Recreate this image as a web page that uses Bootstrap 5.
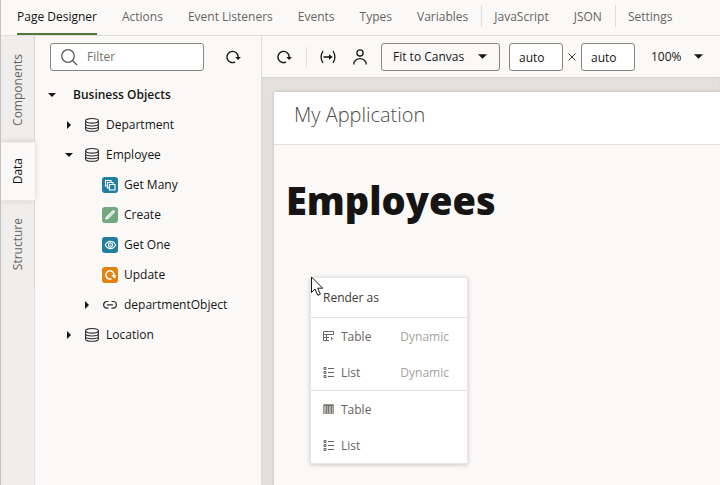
<!DOCTYPE html>
<html lang="en">
<head>
<meta charset="utf-8">
<meta name="viewport" content="width=device-width, initial-scale=1">
<title>Page Designer</title>
<link href="https://cdn.jsdelivr.net/npm/bootstrap@5.3.0/dist/css/bootstrap.min.css" rel="stylesheet">
<style>
body { font-family: "Open Sans", "Noto Sans", sans-serif; font-size: 12px; line-height: 18px; color: #161513; background: #fbf9f8; }
button { font-size: 12px; line-height: 18px; color: inherit; }
svg { display: block; flex: none; }
.shell { border-left: 1px solid #c4c2c0; }
.top-tabs { height: 36px; border-bottom: 1px solid #dfdddb; padding-left: 4px; }
.top-tabs .nav-link { color: #68645f; padding: 8px 0 7px; margin: 0 13px 0 12px; border-bottom: 2px solid transparent; white-space: nowrap; height: 35px; }
.top-tabs .nav-link.active { color: #161513; border-bottom-color: #55753f; }
.tab-rule { width: 1px; height: 22px; background: #dfdddb; margin-top: 5px; }
.rail { width: 34px; background: #f0eeec; }
.rail button { writing-mode: vertical-rl; transform: rotate(180deg); width: 34px; border: 0; border-left: 1px solid #d9d7d5; background: #f0eeec; color: #68645f; padding: 16px 8px 18px 7px; }
.rail button.active { background: #fbf9f8; color: #161513; border-left-color: #fbf9f8; box-shadow: 0 0 6px rgba(0,0,0,.16); padding-top: 16px; padding-bottom: 16px; z-index: 1; }
.tree-pane { width: 227px; border-right: 1px solid #dfdddb; }
.filter-bar { padding: 7px 20px 9px 15px; }
.filter-box { width: 154px; height: 28px; border: 1px solid #8b8580; border-radius: 3px; background: #fff; padding: 0 9px; gap: 9px; }
.filter-box input { font-size: 12px; color: #161513; background: transparent; }
.filter-box input::placeholder { color: #75716c; opacity: 1; }
.tree-row { height: 30px; }
.tree-row .twist { width: 12px; margin-right: 8px; display: flex; justify-content: center; }
.lvl0 { padding-left: 11px; font-weight: 600; }
.lvl0 .twist { margin-right: 15px; }
.lvl1 { padding-left: 28px; }
.lvl2 { padding-left: 46px; }
.tree-row .glyph { width: 18px; margin-right: 5px; display: flex; justify-content: center; }
.tool-bar { height: 41px; padding-left: 14px; }
.tool-rule { width: 1px; height: 20px; background: #dfdddb; margin: 0 12px 0 14px; }
.fit-btn { width: 119px; height: 28px; border: 1px solid #8b8580; border-radius: 3px; background: #fbf9f8; padding: 0 12px 0 11px; margin: 0 9px 0 14px; }
.size-box { width: 54px; height: 28px; border: 1px solid #8b8580; border-radius: 3px; background: #fff; padding: 2px 9px 0; font-size: 12px; color: #161513; }
.stage { background: #e4e1dc; padding: 15px 0 0 12px; box-shadow: inset 0 1px 2px rgba(0,0,0,.06); }
.sheet { background: #fbf9f8; box-shadow: 0 0 3px rgba(0,0,0,.2); }
.app-head { height: 53px; background: #fff; border-bottom: 1px solid #e4e2e0; padding: 9px 20px; font-weight: 300; font-size: 20px; line-height: 27px; color: #504c48; }
.page-title { font-weight: 800; font-size: 38px; line-height: 54px; margin: 0; padding: 28px 12px 0; color: #161513; }
.render-menu { position: absolute; left: 36px; top: 185px; width: 158px; background: #fff; border: 1px solid #e9e7e5; border-radius: 2px; box-shadow: 0 1px 4px rgba(0,0,0,.2); }
.render-head { height: 40px; padding: 11px 12px; border-bottom: 1px solid #e4e2e0; color: #3c3936; }
.render-menu button { height: 36px; padding: 2px 18px 0 12px; gap: 6px; border: 0; background: none; color: #68645f; }
.render-menu .kind { color: #a5a29f; }
.second { border-top: 1px solid #e4e2e0; }
.pointer { position: absolute; left: 0; top: -2px; }
</style>
<script src="https://cdn.jsdelivr.net/npm/bootstrap@5.3.0/dist/js/bootstrap.bundle.min.js"></script>
</head>
<body>
<svg width="0" height="0" class="position-absolute" aria-hidden="true">
  <defs>
    <symbol id="right" viewBox="0 0 8 8"><path d="M2 0L6 4L2 8Z" fill="#161513"/></symbol>
    <symbol id="down" viewBox="0 0 8 8"><path d="M0 2H8L4 6Z" fill="#161513"/></symbol>
    <symbol id="db" viewBox="0 0 16 16"><g fill="none" stroke="#302b2e" stroke-width="1.1"><ellipse cx="8" cy="3.8" rx="6.4" ry="2.3"/><path d="M1.6 4V12C1.6 13.3 4.6 14.3 8 14.3S14.4 13.3 14.4 12V4M1.6 6.8C1.6 8.1 4.6 9 8 9S14.4 8.1 14.4 6.8M1.6 9.5C1.6 10.8 4.6 11.7 8 11.7S14.4 10.8 14.4 9.5"/></g></symbol>
    <symbol id="reload" viewBox="0 0 16 16"><path d="M10 13A5.6 5.6 0 1 1 13.1 8.5" fill="none" stroke="currentColor" stroke-width="1.4"/><path d="M10.3 8H15.9L13.1 11.1Z" fill="currentColor"/></symbol>
    <symbol id="list" viewBox="0 0 12 12"><g fill="none" stroke="#68645f"><path d="M5 1.5H11M5 5.5H11M5 9.5H11"/><path d="M1 .5H3V2.5H1ZM1 4.5H3V6.5H1ZM1 8.5H3V10.5H1Z"/></g></symbol>
  </defs>
</svg>
<div class="shell d-flex flex-column vh-100 overflow-hidden">
  <nav class="top-tabs nav flex-nowrap flex-shrink-0" aria-label="Page views">
    <a class="nav-link active" href="#" aria-current="page">Page Designer</a>
    <a class="nav-link" href="#">Actions</a>
    <a class="nav-link" href="#">Event Listeners</a>
    <a class="nav-link" href="#">Events</a>
    <a class="nav-link" href="#">Types</a>
    <a class="nav-link" href="#">Variables</a>
    <span class="tab-rule"></span>
    <a class="nav-link" href="#">JavaScript</a>
    <a class="nav-link" href="#">JSON</a>
    <span class="tab-rule"></span>
    <a class="nav-link" href="#">Settings</a>
  </nav>
  <div class="d-flex flex-grow-1">
    <div class="rail d-flex flex-column flex-shrink-0">
      <button type="button">Components</button>
      <button type="button" class="active">Data</button>
      <button type="button" class="flex-shrink-0">Structure</button>
      <div class="flex-grow-1 border-end"></div>
    </div>
    <aside class="tree-pane flex-shrink-0">
      <div class="filter-bar d-flex align-items-center justify-content-between">
        <label class="filter-box d-flex align-items-center">
          <svg width="18" height="18" viewBox="0 0 18 18" fill="none" stroke="#5b5753" stroke-width="1.3"><circle cx="8" cy="8" r="6.3"/><path d="M12.5 12.5L17 17"/></svg>
          <input type="text" class="border-0 p-0 w-100" placeholder="Filter" aria-label="Filter">
        </label>
        <button type="button" class="border-0 bg-transparent p-0" aria-label="Reload"><svg width="16" height="16"><use href="#reload"/></svg></button>
      </div>
      <div class="tree-row lvl0 d-flex align-items-center"><span class="twist"><svg width="8" height="8"><use href="#down"/></svg></span>Business Objects</div>
      <div class="tree-row lvl1 d-flex align-items-center"><span class="twist"><svg width="8" height="8"><use href="#right"/></svg></span><span class="glyph"><svg width="16" height="16"><use href="#db"/></svg></span>Department</div>
      <div class="tree-row lvl1 d-flex align-items-center"><span class="twist"><svg width="8" height="8"><use href="#down"/></svg></span><span class="glyph"><svg width="16" height="16"><use href="#db"/></svg></span>Employee</div>
      <div class="tree-row lvl2 d-flex align-items-center"><span class="twist"></span><span class="glyph"><svg width="16" height="16" viewBox="0 0 16 16"><rect width="16" height="16" rx="3" fill="#227e9e"/><g fill="#227e9e" stroke="#fff" stroke-width="1.1"><path d="M3.5 3.5H9V9H3.5Z"/><path d="M5.5 5.5H11V11H5.5Z"/><path d="M7.5 7.5H13V13H7.5Z"/></g></svg></span>Get Many</div>
      <div class="tree-row lvl2 d-flex align-items-center"><span class="twist"></span><span class="glyph"><svg width="16" height="16" viewBox="0 0 16 16"><rect width="16" height="16" rx="3" fill="#76a783"/><path d="M3.2 12.8L3.9 10L10.4 3.7Q11.6 2.8 12.6 3.7Q13.3 4.8 12.4 5.8L6.1 12.1Z" fill="#fff"/><path d="M5.4 10.8L11 5.2" stroke="#76a783" stroke-width=".7"/></svg></span>Create</div>
      <div class="tree-row lvl2 d-flex align-items-center"><span class="twist"></span><span class="glyph"><svg width="16" height="16" viewBox="0 0 16 16"><rect width="16" height="16" rx="3" fill="#227e9e"/><g fill="none" stroke="#fff" stroke-width="1.1"><path d="M3.2 8Q5.3 4.4 8.5 4.4T13.6 8Q11.7 11.6 8.5 11.6T3.2 8Z"/><circle cx="8.4" cy="8" r="2"/></g><circle cx="8.4" cy="8" r=".6" fill="#fff"/></svg></span>Get One</div>
      <div class="tree-row lvl2 d-flex align-items-center"><span class="twist"></span><span class="glyph"><svg width="16" height="16" viewBox="0 0 16 16"><rect width="16" height="16" rx="3" fill="#e2820f"/><path d="M9.5 11.7A4.1 4.1 0 1 1 12 8.5" fill="none" stroke="#fff" stroke-width="1.5"/><path d="M9.3 8H13.6V11L12 11.3Z" fill="#fff"/></svg></span>Update</div>
      <div class="tree-row lvl2 d-flex align-items-center"><span class="twist"><svg width="8" height="8"><use href="#right"/></svg></span><span class="glyph"><svg width="16" height="16" viewBox="0 0 16 16" fill="none" stroke="#302b2e" stroke-width="1.2"><path d="M6.5 4.5H5A3.3 3.3 0 0 0 5 11.2H6.5M9.5 4.5H11A3.3 3.3 0 0 1 11 11.2H9.5M5 7.8H11"/></svg></span>departmentObject</div>
      <div class="tree-row lvl1 d-flex align-items-center"><span class="twist"><svg width="8" height="8"><use href="#right"/></svg></span><span class="glyph"><svg width="16" height="16"><use href="#db"/></svg></span>Location</div>
    </aside>
    <main class="d-flex flex-column flex-grow-1">
      <div class="tool-bar d-flex align-items-center flex-shrink-0">
        <button type="button" class="border-0 bg-transparent p-0" aria-label="Reload page"><svg width="16" height="16"><use href="#reload"/></svg></button>
        <span class="tool-rule"></span>
        <button type="button" class="border-0 bg-transparent p-0" aria-label="Parameters"><svg width="18" height="16" viewBox="0 0 18 16"><path d="M4 2Q.2 8 4 14M14 2Q17.8 8 14 14M4.5 8H12" fill="none" stroke="#161513" stroke-width="1.3"/><path d="M10 5.2L13.6 8L10 10.8Z" fill="#161513"/></svg></button>
        <button type="button" class="border-0 bg-transparent p-0 ms-3" aria-label="User"><svg width="14" height="16" viewBox="0 0 14 16" fill="none" stroke="#161513" stroke-width="1.3"><circle cx="7" cy="4" r="3.1"/><path d="M.8 15.5V14.7A6.2 5 0 0 1 13.2 14.7V15.5"/></svg></button>
        <button type="button" class="fit-btn d-flex align-items-center justify-content-between flex-shrink-0">Fit to Canvas <svg width="9" height="9"><use href="#down"/></svg></button>
        <input class="size-box" type="text" value="auto" aria-label="Width">
        <svg class="mx-1" width="10" height="10" viewBox="0 0 10 10"><path d="M1.5 1.5L8.5 8.5M8.5 1.5L1.5 8.5" stroke="#3c3936"/></svg>
        <input class="size-box" type="text" value="auto" aria-label="Height">
        <button type="button" class="border-0 bg-transparent p-0 d-flex align-items-center gap-2 ms-3"><span class="me-1">100%</span> <svg width="9" height="9"><use href="#down"/></svg></button>
      </div>
      <div class="stage d-flex flex-grow-1">
        <div class="sheet position-relative flex-grow-1">
          <div class="app-head">My Application</div>
          <h1 class="page-title">Employees</h1>
          <div class="render-menu">
            <div class="render-head">Render as</div>
            <button type="button" class="w-100 d-flex align-items-center"><svg width="12" height="12" viewBox="0 0 12 12" fill="none" stroke="#68645f"><path d="M.5 .5H10.5V3.5H.5ZM.5 3.5V9.5H6M.5 6.5H6M3.5 3.5V9.5"/><path d="M8 5.8L10 7.5L8 9.2Z" fill="#68645f" stroke="none"/></svg>Table<span class="kind ms-auto">Dynamic</span></button>
            <button type="button" class="w-100 d-flex align-items-center"><svg width="12" height="12"><use href="#list"/></svg>List<span class="kind ms-auto">Dynamic</span></button>
            <div class="second">
              <button type="button" class="w-100 d-flex align-items-center"><svg width="12" height="12" viewBox="0 0 12 12"><path d="M.5 .5H10.5V9.5H.5Z" fill="#b5b2af" stroke="#9b9793"/><path d="M1 1.5H10M3.5 2V9M5.5 2V9M8.5 2V9" stroke="#77736e"/></svg>Table</button>
              <button type="button" class="w-100 d-flex align-items-center"><svg width="12" height="12"><use href="#list"/></svg>List</button>
            </div>
            <svg class="pointer" width="14" height="21" viewBox="0 0 14 21"><path d="M.5 1V16.5L4 13L6.8 19.3L9.4 18.2L6.7 12.2H11.7Z" fill="#fff" stroke="#161513"/></svg>
          </div>
        </div>
      </div>
    </main>
  </div>
</div>
</body>
</html>
